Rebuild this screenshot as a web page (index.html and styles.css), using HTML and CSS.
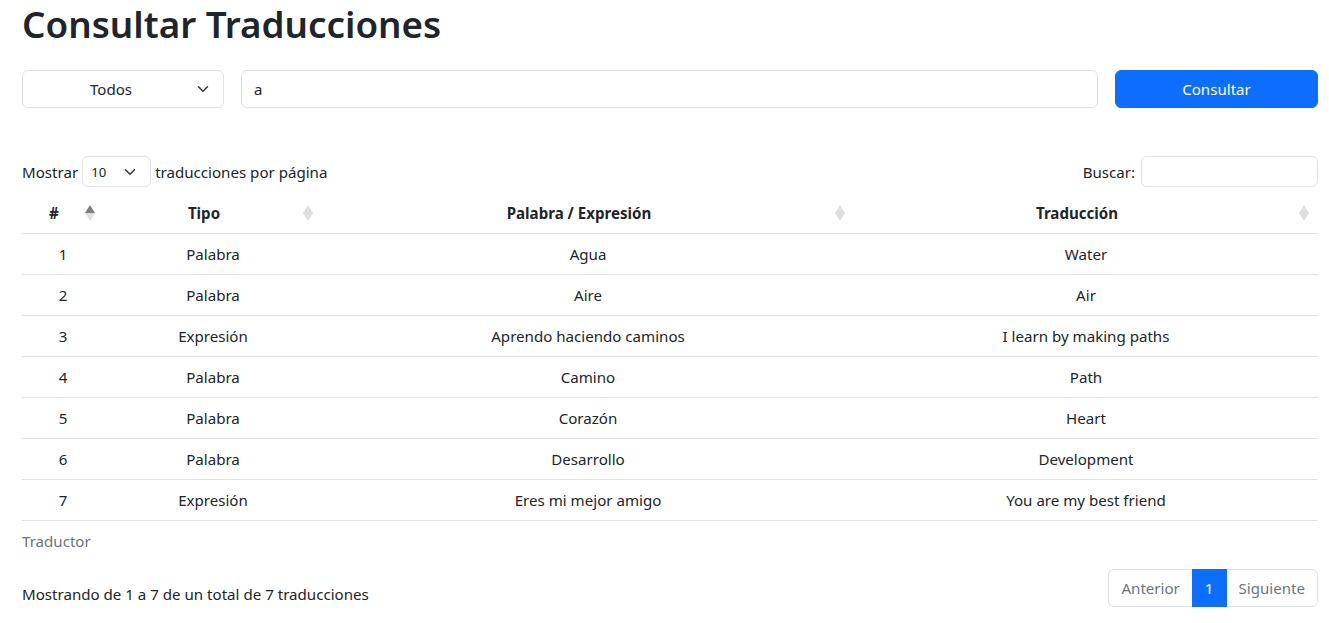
FILE: index.html
```html
<!DOCTYPE html>
<html lang="es">
<head>
<meta charset="utf-8">
<title>Consultar Traducciones</title>
<link rel="stylesheet" href="styles.css">
</head>
<body>
<div class="wrap">
  <h1 class="title">Consultar Traducciones</h1>
  <form class="query">
    <div class="select select-lg"><span class="select-text center">Todos</span><svg class="chev" viewBox="0 0 16 16" width="12" height="12"><path d="M2 5l6 6 6-6" fill="none" stroke="#343a40" stroke-width="2" stroke-linecap="round" stroke-linejoin="round"/></svg></div>
    <div class="input">a</div>
    <button type="button" class="btn">Consultar</button>
  </form>

  <div class="dt-top">
    <div class="length">Mostrar <div class="select select-sm"><span class="select-text">10</span><svg class="chev" viewBox="0 0 16 16" width="12" height="12"><path d="M2 5l6 6 6-6" fill="none" stroke="#343a40" stroke-width="2" stroke-linecap="round" stroke-linejoin="round"/></svg></div> traducciones por página</div>
    <div class="filter">Buscar: <div class="input input-sm"></div></div>
  </div>

  <table class="table">
    <caption>Traductor</caption>
    <colgroup>
      <col class="c1"><col class="c2"><col class="c3"><col class="c4">
    </colgroup>
    <thead>
      <tr>
        <th class="sort asc">#</th>
        <th class="sort">Tipo</th>
        <th class="sort">Palabra / Expresión</th>
        <th class="sort">Traducción</th>
      </tr>
    </thead>
    <tbody>
      <tr><td>1</td><td>Palabra</td><td>Agua</td><td>Water</td></tr>
      <tr><td>2</td><td>Palabra</td><td>Aire</td><td>Air</td></tr>
      <tr><td>3</td><td>Expresión</td><td>Aprendo haciendo caminos</td><td>I learn by making paths</td></tr>
      <tr><td>4</td><td>Palabra</td><td>Camino</td><td>Path</td></tr>
      <tr><td>5</td><td>Palabra</td><td>Corazón</td><td>Heart</td></tr>
      <tr><td>6</td><td>Palabra</td><td>Desarrollo</td><td>Development</td></tr>
      <tr><td>7</td><td>Expresión</td><td>Eres mi mejor amigo</td><td>You are my best friend</td></tr>
    </tbody>
  </table>

  <div class="dt-bottom">
    <div class="info">Mostrando de 1 a 7 de un total de 7 traducciones</div>
    <ul class="pagination">
      <li class="pg disabled">Anterior</li>
      <li class="pg active">1</li>
      <li class="pg disabled">Siguiente</li>
    </ul>
  </div>
</div>
</body>
</html>
```

FILE: styles.css
```css
* { box-sizing: border-box; }
html, body { margin: 0; padding: 0; background: #fff; }
body {
  font-family: "Segoe UI", "Noto Sans", "Open Sans", sans-serif;
  font-size: 15.1px;
  line-height: 24px;
  color: #212529;
}
.wrap { padding: 0 11px 0 22px; }
.title {
  font-size: 36.8px;
  font-weight: 600;
  line-height: 48px;
  margin: 0 0 8px;
}
.query {
  display: grid;
  grid-template-columns: 202px 1fr 203px;
  gap: 17px;
  margin-top: 14px;
  margin-bottom: 48px;
  padding-top: 8px;
}
.select {
  position: relative;
  display: flex;
  align-items: center;
  border: 1px solid #dee2e6;
  border-radius: 6px;
  background: #fff;
}
.select-lg { height: 38px; padding: 0 36px 0 12px; }
.select-text { flex: 1; }
.select-text.center { text-align: center; }
.chev { position: absolute; right: 14px; top: 50%; margin-top: -6px; }
.select-sm { height: 31px; width: 69px; padding: 0 30px 0 8px; font-size: 13.2px; display: inline-flex; margin: 0 4px; vertical-align: middle; }
.select-sm .chev { right: 14px; }
.input {
  height: 38px;
  border: 1px solid #dee2e6;
  border-radius: 6px;
  padding: 6px 12px;
}
.btn {
  height: 38px;
  border: 1px solid #0d6efd;
  background: #0d6efd;
  color: #fff;
  border-radius: 6px;
  font: inherit;
}
.dt-top {
  display: flex;
  justify-content: space-between;
  align-items: center;
}
.length, .filter { display: flex; align-items: center; }
.filter { gap: 6px; }
.input-sm { width: 177px; height: 31px; }
.table {
  width: 100%;
  border-collapse: collapse;
  margin-top: 6px;
  caption-side: bottom;
  text-align: center;
}
.table caption {
  text-align: left;
  color: #6c757d;
  padding: 8px 0;
}
.c1 { width: 82px; }
.c2 { width: 218px; }
.c3 { width: 532px; }
.table th, .table td {
  padding: 8px;
  border-bottom: 1px solid #dee2e6;
}
.table th { font-weight: 700; }
.sort { position: relative; padding-right: 26px !important; }
.sort::before, .sort::after {
  content: "";
  position: absolute;
  right: 9px;
  border-left: 5px solid transparent;
  border-right: 5px solid transparent;
}
.sort::before {
  top: 12px;
  border-bottom: 8px solid #000;
  opacity: 0.125;
}
.sort::after {
  top: 20px;
  border-top: 8px solid #000;
  opacity: 0.125;
}
.sort.asc::before { opacity: 0.5; }
.dt-bottom {
  display: flex;
  justify-content: space-between;
  align-items: flex-start;
  margin-top: 8px;
}
.info { padding-top: 13px; }
.pagination {
  display: flex;
  list-style: none;
  margin: 0;
  padding: 0;
}
.pg {
  padding: 6px 12px;
  border: 1px solid #dee2e6;
  color: #6c757d;
  margin-left: -1px;
  line-height: 24px;
}
.pg:first-child { border-radius: 6px 0 0 6px; }
.pg:last-child { border-radius: 0 6px 6px 0; }
.pg.active { background: #0d6efd; border-color: #0d6efd; color: #fff; position: relative; }
```
